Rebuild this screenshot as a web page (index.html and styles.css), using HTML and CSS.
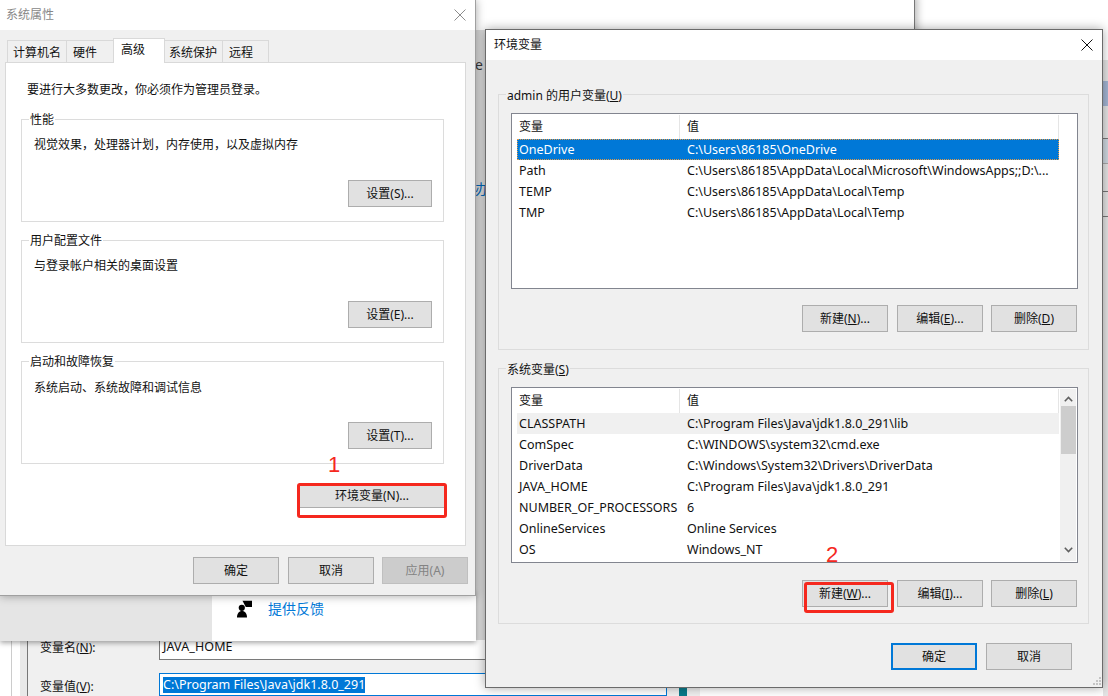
FILE: index.html
```html
<!DOCTYPE html>
<html lang="zh-CN">
<head>
<meta charset="utf-8">
<title>环境变量</title>
<link rel="stylesheet" href="styles.css">
</head>
<body>
<div class="desktop">

  <div class="win back-settings">
    <div class="frag frag-e">e</div>
    <div class="frag frag-ban">办</div>
    <div class="gap-shade"></div>
  </div>
  <div class="right-strip">
    <i class="band band-blue"></i><i class="band band-pale"></i>
    <i class="rule rule-a"></i><i class="rule rule-b"></i><i class="rule rule-c"></i><i class="rule rule-d"></i>
  </div>

  <div class="win back-edit">
    <div class="edit-row row-name">
      <span class="edit-label">变量名(<u>N</u>):</span>
      <span class="edit-input">JAVA_HOME</span>
    </div>
    <div class="edit-row row-value">
      <span class="edit-label">变量值(<u>V</u>):</span>
      <span class="edit-input focus"><span class="sel">C:\Program Files\Java\jdk1.8.0_291</span></span>
    </div>
  </div>
  <div class="teal"></div>

  <div class="win back-feedback">
    <div class="feedback-gray"></div>
    <div class="feedback">
      <svg class="fb-icon" width="16" height="18" viewBox="0 0 16 18"><circle cx="4.800" cy="7.800" r="3.100" fill="#000"/><path d="M0 17.500c0-4 2-6.500 5-6.500s5 2.500 5 6.500z" fill="#000"/><path d="M5.500.700H15V7H8.800z" fill="#000"/></svg>
      <a class="fb-link">提供反馈</a>
    </div>
  </div>

  <section class="win sysprops">
    <header class="titlebar inactive">
      <span>系统属性</span>
      <svg class="close" width="12" height="12" viewBox="0 0 12 12"><path d="M.5.500l11 11M11.500.500l-11 11" stroke="#8c8c8c" fill="none"/></svg>
    </header>
    <div class="sys-body">
      <nav class="tabs">
        <span class="tab t1">计算机名</span>
        <span class="tab t2">硬件</span>
        <span class="tab t3 active">高级</span>
        <span class="tab t4">系统保护</span>
        <span class="tab t5">远程</span>
      </nav>
      <div class="pane">
        <p class="notice">要进行大多数更改，你必须作为管理员登录。</p>
        <fieldset class="group">
          <legend>性能</legend>
          <p class="desc">视觉效果，处理器计划，内存使用，以及虚拟内存</p>
          <div class="group-foot"><button class="btn w84">设置(S)...</button></div>
        </fieldset>
        <fieldset class="group">
          <legend>用户配置文件</legend>
          <p class="desc">与登录帐户相关的桌面设置</p>
          <div class="group-foot"><button class="btn w84">设置(E)...</button></div>
        </fieldset>
        <fieldset class="group">
          <legend>启动和故障恢复</legend>
          <p class="desc">系统启动、系统故障和调试信息</p>
          <div class="group-foot"><button class="btn w84">设置(T)...</button></div>
        </fieldset>
        <div class="env-row"><button class="btn env-btn">环境变量(N)...</button></div>
      </div>
      <div class="sys-actions">
        <button class="btn w86">确定</button>
        <button class="btn w86">取消</button>
        <button class="btn w86 disabled">应用(A)</button>
      </div>
    </div>
  </section>

  <section class="win envvars">
    <header class="titlebar">
      <span>环境变量</span>
      <svg class="close" width="12" height="12" viewBox="0 0 12 12"><path d="M.5.500l11 11M11.500.500l-11 11" stroke="#111" fill="none"/></svg>
    </header>
    <div class="env-body">
      <fieldset class="egroup">
        <legend>admin 的用户变量(<u>U</u>)</legend>
        <div class="list user-list">
          <div class="lrow lhead"><span class="c1">变量</span><span class="c2">值</span></div>
          <div class="lrow selected"><span class="c1">OneDrive</span><span class="c2">C:\Users\86185\OneDrive</span></div>
          <div class="lrow"><span class="c1">Path</span><span class="c2">C:\Users\86185\AppData\Local\Microsoft\WindowsApps;;D:\...</span></div>
          <div class="lrow"><span class="c1">TEMP</span><span class="c2">C:\Users\86185\AppData\Local\Temp</span></div>
          <div class="lrow"><span class="c1">TMP</span><span class="c2">C:\Users\86185\AppData\Local\Temp</span></div>
        </div>
        <div class="list-actions">
          <button class="btn w86">新建(<u>N</u>)...</button>
          <button class="btn w86">编辑(<u>E</u>)...</button>
          <button class="btn w86">删除(<u>D</u>)</button>
        </div>
      </fieldset>
      <fieldset class="egroup">
        <legend>系统变量(<u>S</u>)</legend>
        <div class="list sys-list">
          <div class="lrow lhead"><span class="c1">变量</span><span class="c2">值</span></div>
          <div class="lrow hover"><span class="c1">CLASSPATH</span><span class="c2">C:\Program Files\Java\jdk1.8.0_291\lib</span></div>
          <div class="lrow"><span class="c1">ComSpec</span><span class="c2">C:\WINDOWS\system32\cmd.exe</span></div>
          <div class="lrow"><span class="c1">DriverData</span><span class="c2">C:\Windows\System32\Drivers\DriverData</span></div>
          <div class="lrow"><span class="c1">JAVA_HOME</span><span class="c2">C:\Program Files\Java\jdk1.8.0_291</span></div>
          <div class="lrow"><span class="c1">NUMBER_OF_PROCESSORS</span><span class="c2">6</span></div>
          <div class="lrow"><span class="c1">OnlineServices</span><span class="c2">Online Services</span></div>
          <div class="lrow"><span class="c1">OS</span><span class="c2">Windows_NT</span></div>
          <div class="scrollbar">
            <svg class="arrow" width="9" height="6" viewBox="0 0 9 6"><path d="M.8 5.200L4.500 1.500l3.700 3.700" stroke="#606060" stroke-width="1.600" fill="none"/></svg>
            <div class="thumb"></div>
            <svg class="arrow down" width="9" height="6" viewBox="0 0 9 6"><path d="M.8.800l3.700 3.700L8.200.800" stroke="#606060" stroke-width="1.600" fill="none"/></svg>
          </div>
        </div>
        <div class="list-actions">
          <button class="btn w86">新建(<u>W</u>)...</button>
          <button class="btn w86">编辑(<u>I</u>)...</button>
          <button class="btn w86">删除(<u>L</u>)</button>
        </div>
      </fieldset>
      <div class="env-actions">
        <button class="btn w86 primary">确定</button>
        <button class="btn w86">取消</button>
      </div>
      <svg class="grip" width="9" height="9" viewBox="0 0 9 9"><path d="M7 0h2v2H7zM4 3h2v2H4zM7 3h2v2H7zM1 6h2v2H1zM4 6h2v2H4zM7 6h2v2H7z" fill="#c4c4c4"/></svg>
    </div>
  </section>

  <div class="mark mark-1"></div>
  <span class="num num-1">1</span>
  <div class="mark mark-2"></div>
  <span class="num num-2">2</span>
</div>
</body>
</html>
```

FILE: styles.css
```css
* { box-sizing: border-box; }
html, body { margin: 0; padding: 0; }
body { font-family: "Noto Sans", "Noto Sans CJK SC", sans-serif; font-size: 12px; color: #111; }
.desktop { position: relative; width: 1108px; height: 696px; overflow: hidden; background: #fff; }
.win { position: absolute; }

/* windows behind */
.back-settings { left: 212px; top: -5px; width: 703px; height: 660px; background: #fff; border-right: 1px solid #777; box-shadow: 2px 0 8px rgba(0,0,0,.3); }
.frag { position: absolute; left: 263px; color: #444; font-size: 14px; }
.frag-e { top: 60px; }
.frag-ban { top: 183px; color: #0078d7; }
.gap-shade { position: absolute; left: 264px; top: 35px; width: 9px; height: 610px; background: rgba(0,0,0,.14); }
.right-strip { position: absolute; left: 1103px; top: 60px; width: 5px; height: 636px; background: #e4e4e4; }
.band, .rule { position: absolute; left: 0; width: 5px; }
.band-blue { top: 21px; height: 25px; background: #a3b4d2; }
.band-pale { top: 79px; height: 24px; background: #ced7df; }
.rule { height: 1px; background: #777; }
.rule-a { top: 78px; }
.rule-b { top: 131px; }
.rule-c { top: 156px; }
.rule-d { top: 103px; background: #aaa; }

.back-edit { left: 0; top: 640px; width: 700px; height: 56px; background: linear-gradient(90deg, #fff 0 11px, #ccc 11px 12px, #fff 12px 20px, #e9e9e9 20px 27px, #777 27px 28px, #f0f0f0 28px); }
.edit-row { position: absolute; left: 40px; right: 0; display: flex; }
.row-name { top: 0; height: 20px; }
.row-value { top: 33px; height: 23px; }
.edit-label { width: 119px; line-height: 16px; }
.row-value .edit-label { margin-top: 6px; }
.edit-input { width: 508px; padding: 0 3px; background: #fff; border: 1px solid #7a7a7a; border-top: 0; line-height: 14px; font-size: 12.500px; letter-spacing: .1px; }
.edit-input.focus { border: 1px solid #0078d7; padding-top: 3px; line-height: 16px; }
.sel { background: #0078d7; color: #fff; display: inline-block; letter-spacing: 0; }
.teal { position: absolute; left: 679px; top: 680px; width: 8px; height: 16px; background: #0b7a8a; }

.back-feedback { left: 0; top: 590px; width: 476px; height: 51px; background: #fff; box-shadow: 0 2px 5px rgba(0,0,0,.35); }
.feedback-gray { position: absolute; left: 0; top: 0; width: 212px; height: 51px; background: #e5e5e5; }
.feedback { position: absolute; left: 237px; top: 9px; display: flex; align-items: center; gap: 15px; }
.fb-link { color: #0078d7; font-size: 14px; line-height: 20px; }

/* title bars */
.titlebar { height: 30px; background: #fff; display: flex; align-items: center; justify-content: space-between; padding: 0 9px 0 8px; flex: none; }
.titlebar.inactive { color: #888; padding: 0 9px 0 6px; }
.titlebar span { position: relative; top: -1px; }
.close { flex: none; }

/* buttons */
.btn { flex: none; height: 27px; padding: 0; font: inherit; color: #111; background: #e1e1e1; border: 1px solid #adadad; border-radius: 0; text-align: center; line-height: 23px; }
.w84 { width: 84px; }
.w86 { width: 86px; }
.btn.disabled { background: #ccc; color: #838383; border-color: #bfbfbf; }
.btn.primary { border: 2px solid #0078d7; }

/* system properties */
.sysprops { left: 0; top: 0; width: 476px; height: 596px; background: #f0f0f0; border-right: 1px solid #a0a0a0; border-bottom: 1px solid #a0a0a0; box-shadow: 0 0 9px rgba(0,0,0,.35); display: flex; flex-direction: column; }
.sys-body { flex: 1; padding: 9px 0 0 5px; display: flex; flex-direction: column; }
.tabs { display: flex; height: 23px; align-items: flex-end; padding-left: 2px; position: relative; z-index: 1; }
.tab { height: 22px; border: 1px solid #d9d9d9; border-bottom: 0; margin-right: -1px; background: #f0f0f0; display: flex; align-items: center; justify-content: flex-start; padding-top: 1px; }
.tab.t1 { width: 60px; padding-left: 5px; }
.tab.t2 { width: 48px; padding-left: 6px; }
.tab.t3 { width: 52px; height: 25px; background: #fff; padding: 0 0 5px 7px; margin-bottom: -1px; }
.tab.t4 { width: 59px; padding-left: 4px; }
.tab.t5 { width: 47px; padding-left: 6px; }
.pane { width: 461px; height: 484px; background: #fff; border: 1px solid #d9d9d9; padding: 0 20px 0 15px; flex: none; }
.notice { margin: 18px 0 0 6px; line-height: 17px; height: 17px; }
.group { margin: 0 0 18px; padding: 0; width: 423px; height: 103px; border: 1px solid #dcdcdc; position: relative; display: block; min-width: 0; }
.pane .notice + .group { margin-top: 21px; }
.group legend, .egroup legend { padding: 0 1px; margin-left: 7px; line-height: 17px; height: 17px; }
.group legend { position: absolute; top: -9px; left: 0; background: #fff; }
.desc { margin: 0; position: absolute; left: 12px; top: 16px; line-height: 17px; }
.group:nth-of-type(3) .desc { top: 17px; }
.group-foot { position: absolute; right: 11px; top: 60px; }
.env-row { display: flex; justify-content: flex-end; margin-top: 19px; }
.env-btn { width: 146px; height: 25px; line-height: 20px; }
.sys-actions { display: flex; gap: 9px; margin-top: 11px; padding-left: 188px; }
.sys-actions .disabled { margin-left: -1px; }

/* env vars */
.envvars { left: 485px; top: 29px; width: 618px; height: 659px; background: #f0f0f0; border: 1px solid #6b6b6b; box-shadow: 0 0 10px rgba(0,0,0,.35); display: flex; flex-direction: column; }
.env-body { flex: 1; position: relative; padding: 34px 13px 0 12px; display: flex; flex-direction: column; gap: 18px; }
.egroup { margin: 0; padding: 18px 12px 0; width: 591px; height: 256px; border: 1px solid #dcdcdc; position: relative; min-width: 0; flex: none; }
.egroup legend { position: absolute; top: -8px; left: 0; background: #f0f0f0; padding: 0 1px; }
.list { position: relative; width: 567px; height: 176px; background: #fff; border: 1px solid #82858f; padding: 1px 18px 0 5px; }
.lrow { display: flex; height: 21px; align-items: center; font-size: 12.500px; }
.lhead { height: 24px; margin-left: -5px; padding-left: 5px; border-right: 1px solid #e5e5e5; font-size: 12px; }
.lhead .c1 { border-right: 1px solid #e5e5e5; align-self: stretch; display: flex; align-items: center; padding-bottom: 2px; }
.lhead .c2 { align-self: stretch; display: flex; align-items: center; padding-bottom: 2px; }
.c1 { width: 163px; padding-left: 2px; flex: none; white-space: nowrap; }
.c2 { padding-left: 7px; white-space: nowrap; }
.selected { background: #0078d7; color: #fff; outline: 1px dotted #e09a4a; outline-offset: -1px; }
.hover { background: #f0f0f0; }
.scrollbar { position: absolute; right: 1px; top: 1px; bottom: 1px; width: 16px; background: #f0f0f0; display: flex; flex-direction: column; align-items: center; padding-top: 7px; }
.arrow { flex: none; }
.thumb { width: 15px; height: 48px; background: #cdcdcd; margin-top: 4px; }
.arrow.down { margin-top: auto; margin-bottom: 8px; }
.list-actions { display: flex; justify-content: flex-end; gap: 8px; margin-top: 16px; margin-right: -1px; }
.list-actions .btn:first-child { margin-right: 1px; }
.sys-list + .list-actions { margin-top: 17px; }
.env-actions { display: flex; gap: 9px; padding-left: 393px; margin-top: 1px; }
.grip { position: absolute; right: 1px; bottom: 1px; }

/* annotations */
.mark { position: absolute; border: 3px solid #f5281e; border-radius: 3px; }
.mark-1 { left: 297px; top: 483px; width: 150px; height: 35px; }
.mark-2 { left: 804px; top: 582px; width: 90px; height: 31px; }
.num { position: absolute; color: #f5281e; font-family: "Liberation Sans", sans-serif; font-size: 22px; line-height: 22px; }
.num-1 { left: 328px; top: 454px; }
.num-2 { left: 826px; top: 544px; }
```
